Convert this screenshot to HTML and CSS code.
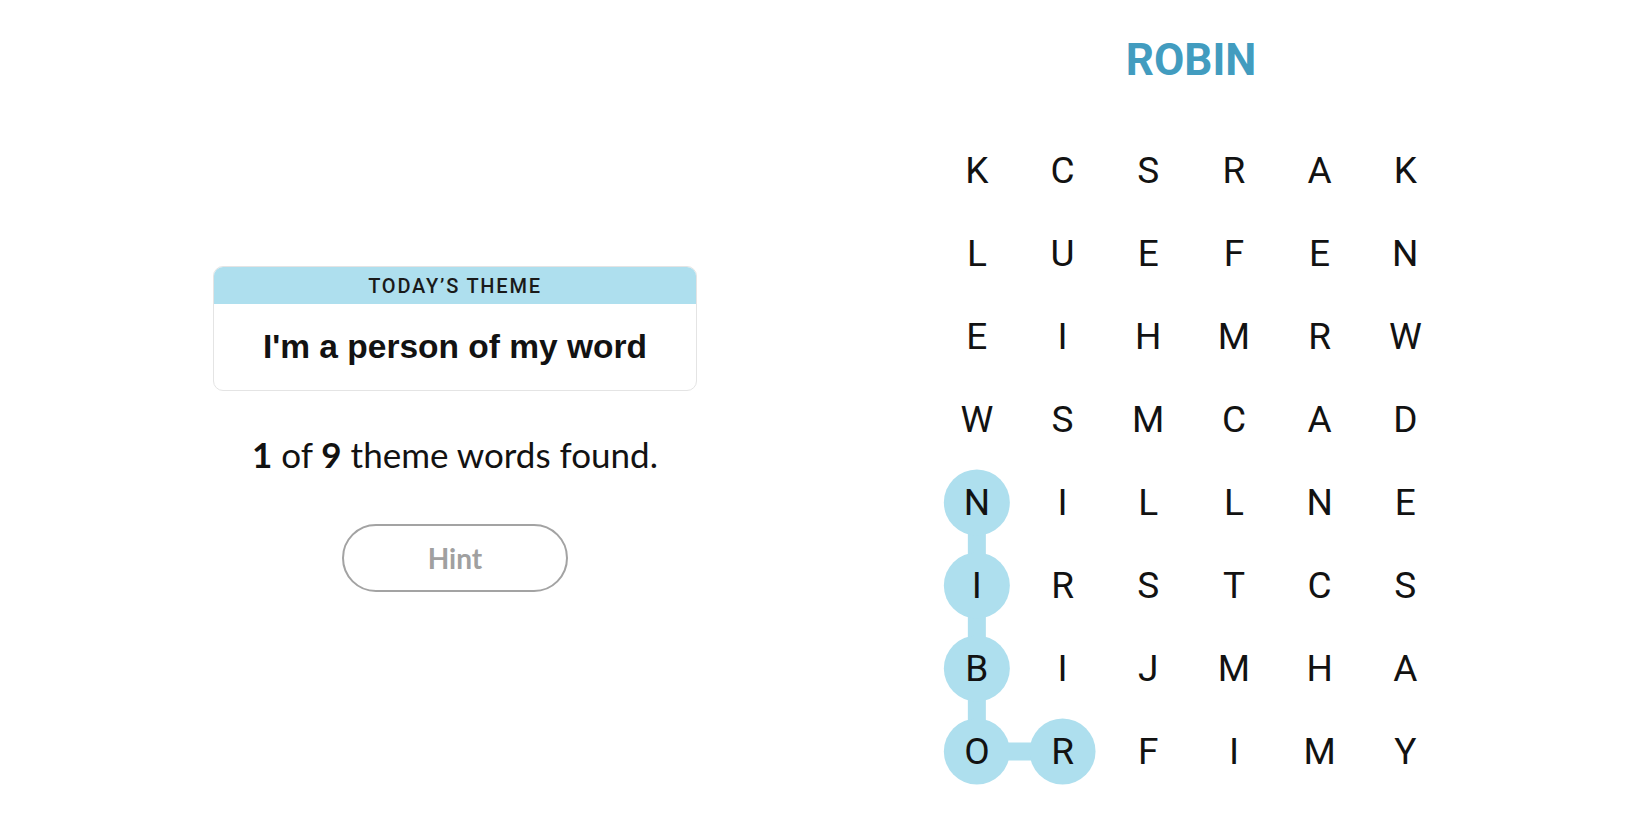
FILE: index.html
```html
<!DOCTYPE html>
<html lang="en">
<head>
<meta charset="utf-8">
<title>Strands</title>
<link rel="stylesheet" href="styles.css">
</head>
<body>
<main class="page">
  <section class="info">
    <div class="theme-card">
      <div class="theme-head">TODAY’S THEME</div>
      <div class="theme-body">I'm a person of my word</div>
    </div>
    <p class="progress"><b>1</b> of <b>9</b> theme words found.</p>
    <button class="hint" type="button">Hint</button>
  </section>
  <section class="board">
    <h1 class="found-word">ROBIN</h1>
    <div class="grid">
      <svg class="paths" width="514.2" height="664" viewBox="0 0 514.2 664" aria-hidden="true">
        <g stroke="#aedfee" stroke-width="18" fill="none" stroke-linecap="butt">
          <polyline points="42.85,373.5 42.85,622.5 128.55,622.5"/>
        </g>
        <g fill="#aedfee">
          <circle cx="42.85" cy="373.5" r="33"/>
          <circle cx="42.85" cy="456.5" r="33"/>
          <circle cx="42.85" cy="539.5" r="33"/>
          <circle cx="42.85" cy="622.5" r="33"/>
          <circle cx="128.55" cy="622.5" r="33"/>
        </g>
      </svg>
      <span>K</span><span>C</span><span>S</span><span>R</span><span>A</span><span>K</span>
      <span>L</span><span>U</span><span>E</span><span>F</span><span>E</span><span>N</span>
      <span>E</span><span>I</span><span>H</span><span>M</span><span>R</span><span>W</span>
      <span>W</span><span>S</span><span>M</span><span>C</span><span>A</span><span>D</span>
      <span>N</span><span>I</span><span>L</span><span>L</span><span>N</span><span>E</span>
      <span>I</span><span>R</span><span>S</span><span>T</span><span>C</span><span>S</span>
      <span>B</span><span>I</span><span>J</span><span>M</span><span>H</span><span>A</span>
      <span>O</span><span>R</span><span>F</span><span>I</span><span>M</span><span>Y</span>
    </div>
  </section>
</main>
</body>
</html>
```

FILE: styles.css
```css
html, body {
  margin: 0;
  padding: 0;
  background: #ffffff;
}

body {
  width: 1650px;
  height: 825px;
  overflow: hidden;
  font-family: Lato, "Liberation Sans", sans-serif;
  color: #121212;
}

.page {
  display: flex;
  align-items: flex-start;
  padding-left: 213px;
  gap: 237px;
}

.info {
  width: 484px;
  padding-top: 266px;
  display: flex;
  flex-direction: column;
  align-items: center;
}

.theme-card {
  width: 484px;
  box-sizing: border-box;
  border: 1px solid #e4e4e4;
  border-radius: 10px;
  overflow: hidden;
  background: #fff;
}

.theme-head {
  height: 37px;
  background: #aedfee;
  display: flex;
  align-items: center;
  justify-content: center;
  font-family: Roboto, "Liberation Sans", sans-serif;
  font-weight: 500;
  font-size: 20px;
  letter-spacing: 1.8px;
  color: #1a1a1a;
}

.theme-body {
  height: 86px;
  display: flex;
  align-items: center;
  justify-content: center;
  font-family: "Liberation Sans", Arial, sans-serif;
  font-weight: 700;
  font-size: 33.5px;
  color: #121212;
  padding-bottom: 1px;
  box-sizing: border-box;
}

.progress {
  margin: 42px 0 0;
  font-size: 35px;
  line-height: 42px;
  font-weight: 400;
}

.progress b {
  font-weight: 700;
}

.hint {
  margin-top: 49px;
  width: 226px;
  height: 68px;
  border: 2px solid #a3a3a3;
  border-radius: 34px;
  background: #fff;
  font-family: Lato, "Liberation Sans", sans-serif;
  font-weight: 700;
  font-size: 28px;
  color: #a0a0a0;
  padding: 0;
}

.board {
  width: 514.2px;
  padding-top: 34px;
  display: flex;
  flex-direction: column;
  align-items: center;
}

.found-word {
  margin: 0;
  font-family: Roboto, "Liberation Sans", sans-serif;
  font-weight: 700;
  font-size: 44px;
  line-height: 52px;
  color: #429cbf;
}

.grid {
  position: relative;
  margin-top: 42.5px;
  display: grid;
  grid-template-columns: repeat(6, 85.7px);
  grid-template-rows: repeat(8, 83px);
  font-family: Roboto, "Liberation Sans", sans-serif;
  font-size: 37px;
  font-weight: 400;
  color: #121212;
}

.grid span {
  position: relative;
  display: flex;
  align-items: center;
  justify-content: center;
}

.paths {
  position: absolute;
  left: 0;
  top: 0;
}
```
